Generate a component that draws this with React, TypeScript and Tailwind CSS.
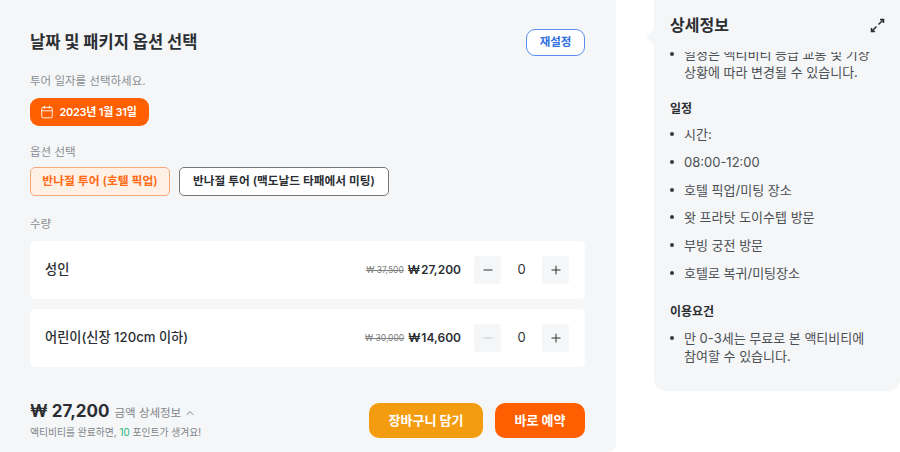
import { Calendar, ChevronUp, Minus, Plus } from 'lucide-react';

const font = "font-['Inter','Noto_Sans_CJK_KR',sans-serif]";

const rows = [
  { name: '성인', was: '₩ 37,500', now: '₩\u200a27,200', minusOff: false, gap: 'mb-[10px]' },
  { name: '어린이(신장 120cm 이하)', was: '₩ 30,000', now: '₩\u200a14,600', minusOff: true, gap: '' },
];

const schedule = ['시간:', '08:00-12:00', '호텔 픽업/미팅 장소', '왓 프라탓 도이수텝 방문', '부빙 궁전 방문', '호텔로 복귀/미팅장소'];

function StepButton({ off, children }: { off?: boolean; children: React.ReactNode }) {
  return (
    <button className={`flex h-[28px] w-[27px] items-center justify-center rounded-[3px] bg-[#f5f6f7] ${off ? 'text-[#c4c4c4]' : 'text-[#333]'}`}>
      {children}
    </button>
  );
}

function Bullet({ children, className }: { children: React.ReactNode; className?: string }) {
  return (
    <li className={`flex ${className ?? ''}`}>
      <span className="mr-[10px] mt-[7px] h-[4px] w-[4px] shrink-0 rounded-full bg-[#33373b]" />
      <span className="break-keep">{children}</span>
    </li>
  );
}

export default function App() {
  return (
    <div className={`flex h-[452px] w-[900px] overflow-hidden bg-white ${font}`}>
      <section className="flex h-full w-[616px] shrink-0 flex-col rounded-br-lg bg-[#f5f6f7] pl-[30px] pr-[31px]">
        <div className="mt-[29px] flex h-[27px] items-center justify-between">
          <h2 className="text-[16.5px] font-bold text-[#2b2f33]">날짜 및 패키지 옵션 선택</h2>
          <button className="h-[27px] w-[59px] rounded-[9px] border border-[#5b8def] bg-white text-[11.5px] font-semibold text-[#2f6fe0]">재설정</button>
        </div>

        <p className="mt-[16px] text-[11.5px] leading-[18px] text-[#8a8f94]">투어 일자를 선택하세요.</p>
        <button className="mt-[8px] flex h-[28px] w-[119px] items-center justify-center gap-[5px] rounded-[9px] bg-[#ff5f00] pr-[2px] text-[11px] font-semibold tracking-[-0.25px] text-white">
          <Calendar size={14} strokeWidth={1.5} />
          2023년 1월 31일
        </button>

        <p className="mt-[17px] text-[11.5px] leading-[18px] text-[#8a8f94]">옵션 선택</p>
        <div className="mt-[6px] flex gap-[9px]">
          <button className="h-[29px] w-[140px] rounded-[5px] border border-[#f9a877] bg-[#fff0e6] text-[11.8px] font-semibold text-[#ff6a13]">반나절 투어 (호텔 픽업)</button>
          <button className="h-[29px] w-[210px] rounded-[5px] border border-[#777] bg-white text-[11.7px] font-semibold text-[#2b2f33]">반나절 투어 (맥도날드 타패에서 미팅)</button>
        </div>

        <p className="mt-[19px] text-[11.5px] leading-[18px] text-[#8a8f94]">수량</p>

        <div className="mt-[8px]">
          {rows.map((row) => (
            <div key={row.name} className={`flex h-[58px] items-center rounded-[5px] bg-white pl-[15px] pr-[16px] ${row.gap}`}>
              <span className="flex-1 text-[13.2px] font-medium text-[#2b2f33]">{row.name}</span>
              <span className="mr-[4px] text-[8.5px] text-[#808080] line-through">{row.was}</span>
              <span className="mr-[13px] text-[12px] font-semibold text-[#2b2f33]">{row.now}</span>
              <StepButton off={row.minusOff}><Minus size={14} strokeWidth={1.75} /></StepButton>
              <span className="w-[41px] text-center text-[13px] font-normal text-[#333]">0</span>
              <StepButton><Plus size={14} strokeWidth={1.75} /></StepButton>
            </div>
          ))}
        </div>

        <div className="mt-[36px] flex items-start justify-between">
          <div>
            <div className="flex items-baseline">
              <span className="text-[17px] font-bold leading-[16px] text-[#2b2f33]">₩ 27,200</span>
              <span className="ml-[5px] flex items-center gap-[3px] text-[11.5px] leading-[16px] text-[#808589]">
                금액 상세정보 <ChevronUp size={12} />
              </span>
            </div>
            <p className="mt-[5px] text-[9.8px] leading-[14px] text-[#808589]">
              액티비티를 완료하면, <span className="text-[#22b573]">10</span> 포인트가 생겨요!
            </p>
          </div>
          <div className="flex gap-[12px]">
            <button className="h-[35px] w-[114px] rounded-[10px] bg-[#f39c0f] text-[13px] font-bold text-white">장바구니 담기</button>
            <button className="h-[35px] w-[90px] rounded-[10px] bg-[#ff5f00] text-[13px] font-bold text-white">바로 예약</button>
          </div>
        </div>
      </section>

      <aside className="relative ml-[38px] flex h-[391px] w-[246px] flex-col rounded-b-[12px] bg-[#f5f6f7] pl-[16px] pr-[16px]">
        <div className="absolute left-[-8px] top-[29px] h-0 w-0 border-y-[8px] border-r-[8px] border-y-transparent border-r-[#f5f6f7]" />
        <header className="flex h-[52px] shrink-0 items-center justify-between pb-[2px]">
          <h3 className="text-[16px] font-bold text-[#2b2f33]">상세정보</h3>
          <svg width="15" height="15" viewBox="0 0 15 15" fill="none" stroke="#2b2f33" strokeWidth="1.5" className="mr-[-1px]">
            <path d="M10 1.5h3.5V5M13.5 1.5L8.5 6.5M5 13.5H1.5V10M1.5 13.5l5-5" />
          </svg>
        </header>
        <div className="min-h-0 flex-1 overflow-hidden text-[13px] text-[#4a4f54]">
          <ul className="mt-[-7px] leading-[18px]">
            <Bullet>일정은 액티비티 등급 교통 및 기상 상황에 따라 변경될 수 있습니다.</Bullet>
          </ul>
          <h4 className="mt-[19px] text-[12px] font-bold leading-[18px] text-[#2b2f33]">일정</h4>
          <ul className="mt-[2px]">
            {schedule.map((item) => (
              <Bullet key={item} className="h-[27.8px] items-start pt-[5px] leading-[18px]">{item}</Bullet>
            ))}
          </ul>
          <h4 className="mt-[16px] text-[12px] font-bold leading-[18px] text-[#2b2f33]">이용요건</h4>
          <ul className="mt-[8px] leading-[18px]">
            <Bullet>만 0-3세는 무료로 본 액티비티에 참여할 수 있습니다.</Bullet>
          </ul>
        </div>
      </aside>
    </div>
  );
}
